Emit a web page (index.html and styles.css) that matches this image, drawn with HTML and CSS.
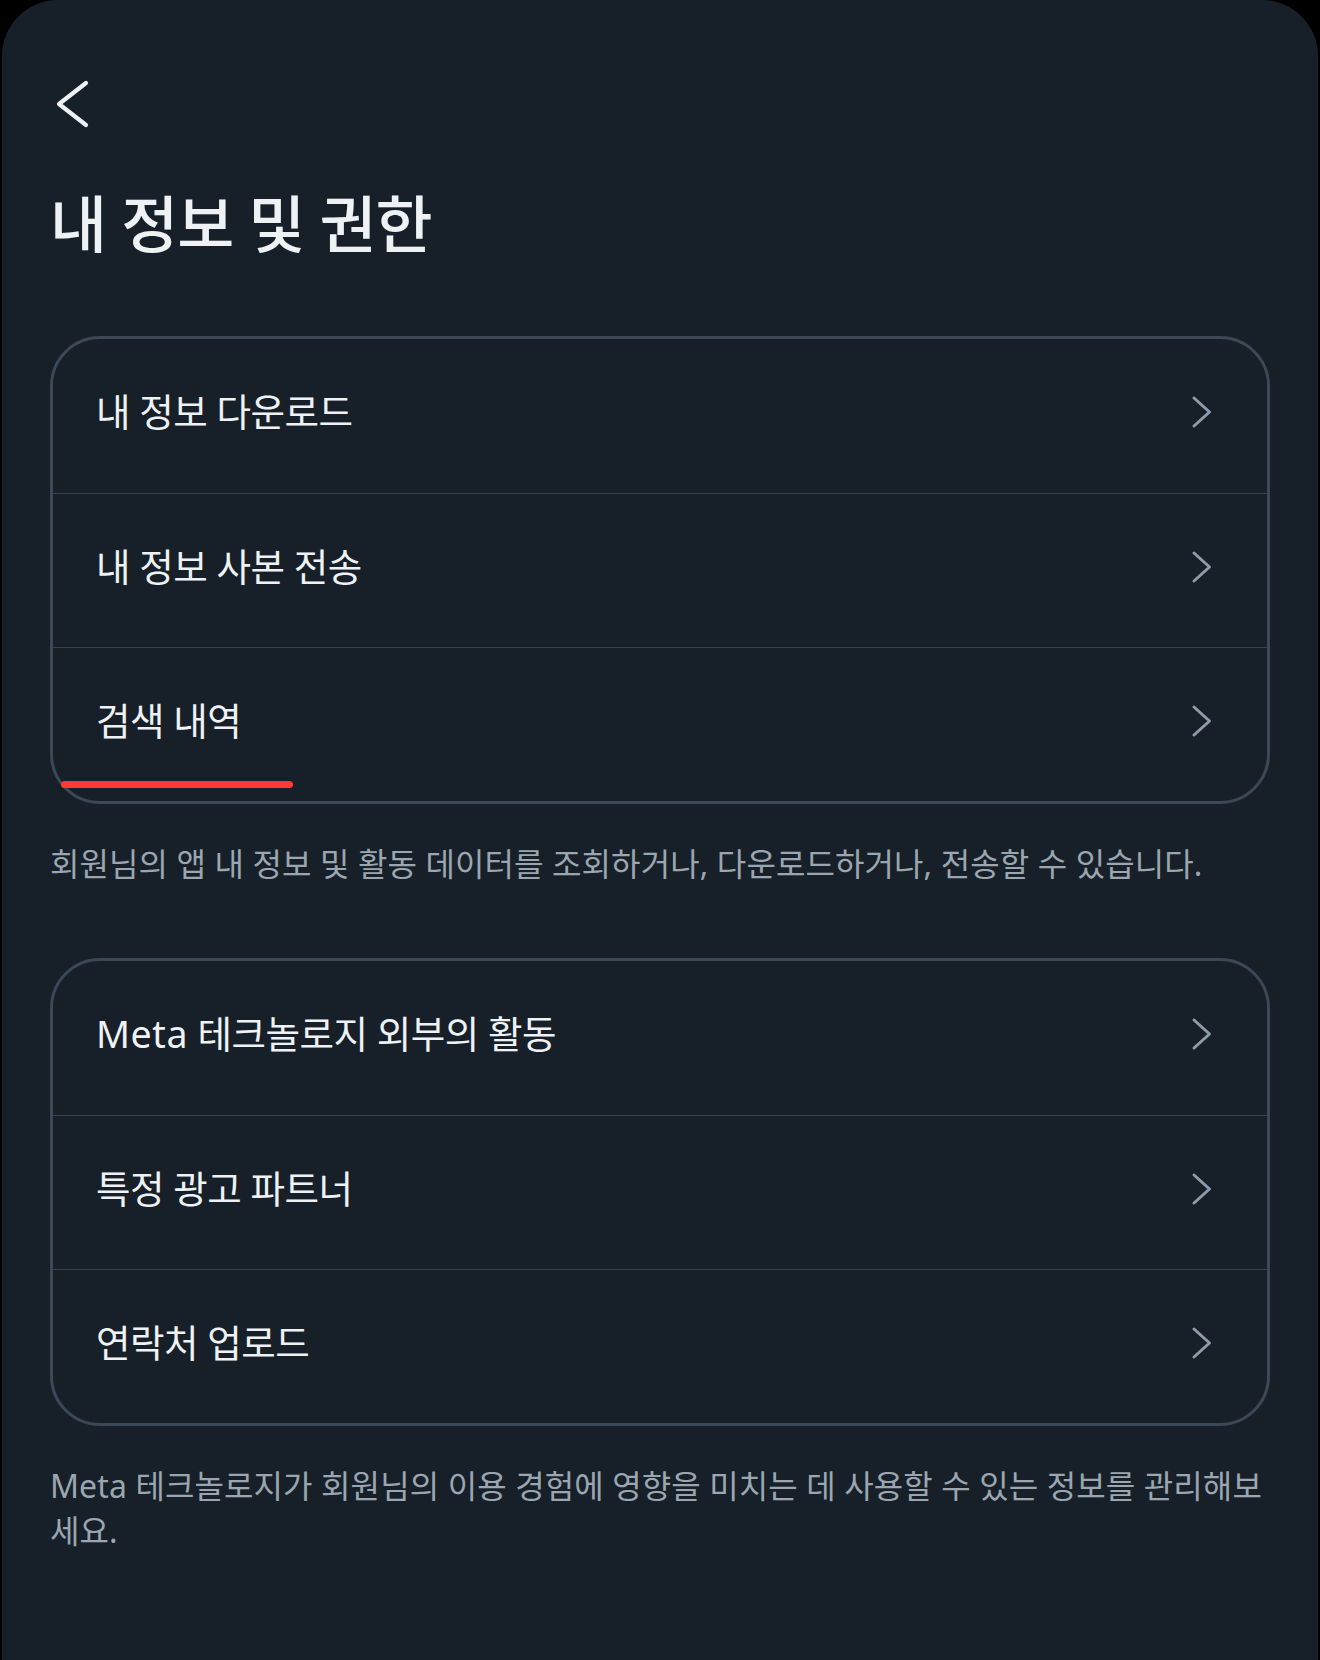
FILE: index.html
```html
<!DOCTYPE html>
<html lang="ko">
<head>
<meta charset="utf-8">
<title>내 정보 및 권한</title>
<link rel="stylesheet" href="styles.css">
</head>
<body>
<div class="screen">
  <header class="topbar">
    <button class="back" aria-label="뒤로">
      <svg width="44" height="52" viewBox="0 0 44 52"><polyline points="36,5 9,26 36,47" fill="none" stroke="currentColor" stroke-width="4.2" stroke-linecap="round" stroke-linejoin="round"/></svg>
    </button>
  </header>

  <h1 class="title">내 정보 및 권한</h1>

  <section class="group">
    <ul class="card">
      <li class="row"><span class="label">내 정보 다운로드</span><svg class="chev" width="24" height="36" viewBox="0 0 24 36"><polyline points="4,4 19.5,18 4,32" fill="none" stroke="currentColor" stroke-width="3" stroke-linecap="round" stroke-linejoin="round"/></svg></li>
      <li class="row"><span class="label">내 정보 사본 전송</span><svg class="chev" width="24" height="36" viewBox="0 0 24 36"><polyline points="4,4 19.5,18 4,32" fill="none" stroke="currentColor" stroke-width="3" stroke-linecap="round" stroke-linejoin="round"/></svg></li>
      <li class="row"><span class="label">검색 내역</span><svg class="chev" width="24" height="36" viewBox="0 0 24 36"><polyline points="4,4 19.5,18 4,32" fill="none" stroke="currentColor" stroke-width="3" stroke-linecap="round" stroke-linejoin="round"/></svg></li>
      <li class="mark" aria-hidden="true"></li>
    </ul>
    <p class="note">회원님의 앱 내 정보 및 활동 데이터를 조회하거나, 다운로드하거나, 전송할 수 있습니다.</p>
  </section>

  <section class="group group-second">
    <ul class="card">
      <li class="row"><span class="label"><span class="latin">Meta</span> 테크놀로지 외부의 활동</span><svg class="chev" width="24" height="36" viewBox="0 0 24 36"><polyline points="4,4 19.5,18 4,32" fill="none" stroke="currentColor" stroke-width="3" stroke-linecap="round" stroke-linejoin="round"/></svg></li>
      <li class="row"><span class="label">특정 광고 파트너</span><svg class="chev" width="24" height="36" viewBox="0 0 24 36"><polyline points="4,4 19.5,18 4,32" fill="none" stroke="currentColor" stroke-width="3" stroke-linecap="round" stroke-linejoin="round"/></svg></li>
      <li class="row"><span class="label">연락처 업로드</span><svg class="chev" width="24" height="36" viewBox="0 0 24 36"><polyline points="4,4 19.5,18 4,32" fill="none" stroke="currentColor" stroke-width="3" stroke-linecap="round" stroke-linejoin="round"/></svg></li>
    </ul>
    <p class="note">Meta 테크놀로지가 회원님의 이용 경험에 영향을 미치는 데 사용할 수 있는 정보를 관리해보세요.</p>
  </section>
</div>
</body>
</html>
```
FILE: styles.css
```css
* { box-sizing: border-box; }

html, body {
  margin: 0;
  padding: 0;
  background: #000;
}

body {
  font-family: "Noto Sans", "Noto Sans CJK KR", sans-serif;
  color: #eef2f5;
}

.screen {
  margin: 0 2px;
  min-height: 1660px;
  background: #172028;
  border-radius: 56px 56px 0 0;
  padding: 0 48px;
  display: flex;
  flex-direction: column;
}

.topbar {
  padding-top: 78px;
  height: 130px;
  display: flex;
  align-items: flex-start;
}

.back {
  background: none;
  border: 0;
  padding: 0;
  color: #eef2f5;
  display: block;
  line-height: 0;
}

.title {
  margin: 59px 0 0;
  font-size: 62px;
  line-height: 70px;
  font-weight: 500;
  letter-spacing: -1px;
  color: #eef2f5;
}

.group {
  margin-top: 77px;
  display: flex;
  flex-direction: column;
}

.group-second {
  margin-top: 72px;
}

.card {
  position: relative;
  list-style: none;
  margin: 0;
  padding: 0;
  border: 3px solid #3b4957;
  border-radius: 50px;
}

.row {
  height: 154px;
  display: flex;
  align-items: center;
  justify-content: space-between;
  padding: 0 53px 8px 43px;
}

.row + .row {
  border-top: 1px solid #35434f;
}

.label {
  font-size: 37.5px;
  line-height: 44px;
  font-weight: 400;
  letter-spacing: -0.5px;
  color: #eef2f5;
}

.latin {
  letter-spacing: 0.6px;
}

.chev {
  display: block;
  color: #8e9ba8;
}

.mark {
  position: absolute;
  left: 8px;
  bottom: 13px;
  width: 232px;
  height: 7px;
  border-radius: 4px;
  background: #ff3a33;
}

.note {
  margin: 37px 0 0;
  font-size: 32px;
  line-height: 45px;
  letter-spacing: 0.1px;
  color: #9ba6b1;
}
```
